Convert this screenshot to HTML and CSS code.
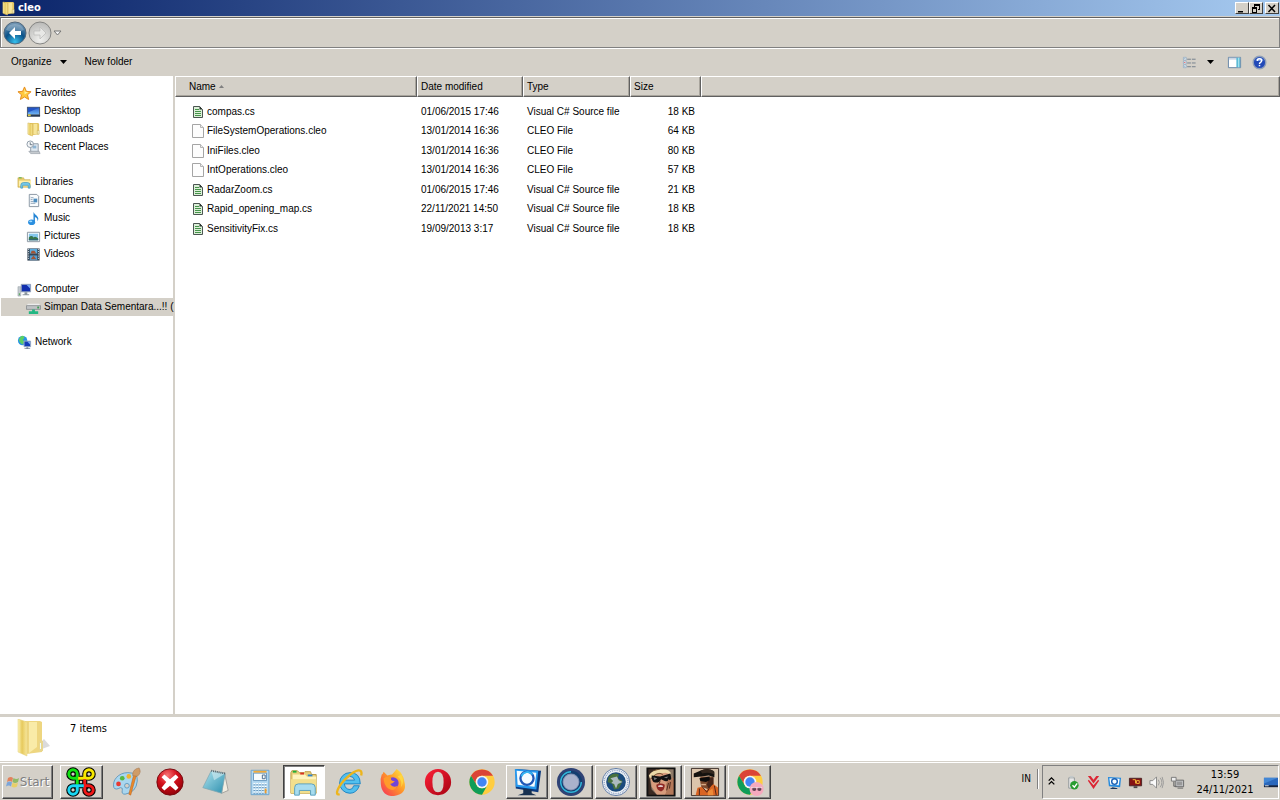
FILE: index.html
```html
<!DOCTYPE html>
<html lang="en">
<head>
<meta charset="utf-8">
<title>cleo</title>
<link rel="stylesheet" href="styles.css">
</head>
<body>
<svg class="defs" aria-hidden="true">
  <defs>
    <linearGradient id="gold" x1="0" x2="1" y1="0" y2="0"><stop offset="0" stop-color="#fdf3b4"/><stop offset=".45" stop-color="#e6c95c"/><stop offset="1" stop-color="#f8e79c"/></linearGradient>
    <linearGradient id="blue" x1="0" x2="0" y1="0" y2="1"><stop offset="0" stop-color="#2f62cf"/><stop offset="1" stop-color="#6db4f4"/></linearGradient>
    <linearGradient id="shade" x1="0" x2="1" y1="0" y2="1"><stop offset="0" stop-color="#aee3ee"/><stop offset="1" stop-color="#2d8fae"/></linearGradient>
    <radialGradient id="orb" cx=".5" cy=".9" r=".9"><stop offset="0" stop-color="#36c0ee"/><stop offset=".5" stop-color="#0b5288"/><stop offset="1" stop-color="#7d9db8"/></radialGradient>
    <radialGradient id="orbgrey" cx=".5" cy=".8" r=".8"><stop offset="0" stop-color="#f0f0ee"/><stop offset="1" stop-color="#b9b9b7"/></radialGradient>
    <radialGradient id="redball" cx=".4" cy=".25" r=".8"><stop offset="0" stop-color="#f87878"/><stop offset=".45" stop-color="#d4101b"/><stop offset="1" stop-color="#8c0008"/></radialGradient>
    <linearGradient id="fire" x1="1" x2="0" y1="0" y2="1"><stop offset="0" stop-color="#fff04a"/><stop offset=".45" stop-color="#ff9a28"/><stop offset="1" stop-color="#f52a5c"/></linearGradient>
    <linearGradient id="opera" x1="0" x2="1" y1="0" y2="1"><stop offset="0" stop-color="#ff2038"/><stop offset="1" stop-color="#a50312"/></linearGradient>
    <symbol id="folder" viewBox="0 0 16 16"><path d="M4 1h9l1 1v11l-8 1H4z" fill="#e3c563"/><path d="M2 1l5 1v13l-5-2z" fill="url(#gold)" stroke="#cfae45" stroke-width=".5"/><path d="M8 2h4v11H8z" fill="#f6e59a"/><path d="M12 9h2v4h-2z" fill="#f4f1cd" stroke="#c4a447" stroke-width=".5"/></symbol>
    <symbol id="source" viewBox="0 0 14 16"><path d="M2.500 2.500h6l3 3v8h-9z" fill="#dcefd9" stroke="#4b5551"/><path d="M8.500 2v3.500h3z" fill="#26302b"/><path d="M4 5.500h4M4 7.500h6M4 9.500h6M4 11.500h6" stroke="#46944a"/></symbol>
    <symbol id="blank" viewBox="0 0 14 16"><path d="M1.500 1.500h8l3 3v10h-11z" fill="#fdfdfd" stroke="#a5a5a5"/><path d="M9.500 1.500v3h3" fill="#eee" stroke="#b5b5b5"/></symbol>
    <symbol id="library" viewBox="0 0 16 16"><path d="M1 3h6l1 2h6v8H1z" fill="#e8cc6d" stroke="#c8a744" stroke-width=".6"/><path d="M2 6h13v6H2z" fill="#fff0ad"/><path d="M2 3h3" stroke="#44ad42"/><path d="M4 14v-3q0-3 3-3h4q3 0 3 3v3h-2v-3H6v3z" fill="#74c8e9" stroke="#3c92b9" stroke-width=".7"/></symbol>
    <symbol id="chrome" viewBox="0 0 32 32"><circle cx="16" cy="16" r="13.500" fill="#ffcd40"/><path d="M4.300 9.300A13.500 13.500 0 0 1 27.700 9.300H16a6.700 6.700 0 0 0-5.900 10z" fill="#db4437"/><path d="M4.300 9.300A13.500 13.500 0 0 0 16 29.500l5.900-10.200a6.700 6.700 0 0 1-11.700 0z" fill="#0f9d58"/><circle cx="16" cy="16" r="6.700" fill="#f4f4f4"/><circle cx="16" cy="16" r="5" fill="#4285f4"/></symbol>
  </defs>
</svg>

<header class="titlebar">
  <svg class="i16"><use href="#folder"/></svg>
  <h1>cleo</h1>
  <div class="controls">
    <button aria-label="Minimize"><svg viewBox="0 0 10 9"><path d="M1 7h5v1.500H1z"/></svg></button>
    <button aria-label="Restore"><svg viewBox="0 0 10 9"><path d="M3 0h6v6H7V5h1V2H4v1H3zM1 3h5v6H1zm1 2v3h3V5z" fill-rule="evenodd"/></svg></button>
    <button class="close" aria-label="Close"><svg viewBox="0 0 10 9"><path d="M1.500 1l6.500 7M8 1L1.500 8" stroke="#000" stroke-width="1.500"/></svg></button>
  </div>
</header>

<nav class="navbar" aria-label="History">
  <button aria-label="Back"><svg viewBox="0 0 24 24"><circle cx="12" cy="12" r="11" fill="url(#orb)" stroke="#52677a"/><path d="M3 9a9.500 9 0 0 1 18 0q-9 4-18 0z" fill="#fff" opacity=".25"/><path d="M12 6l-6 6 6 6v-4h6v-4h-6z" fill="#fff"/></svg></button>
  <button aria-label="Forward"><svg viewBox="0 0 24 24"><circle cx="12" cy="12" r="11" fill="url(#orbgrey)" stroke="#858583"/><path d="M12 6l6 6-6 6v-4H6v-4h6z" fill="#e8e8e6" stroke="#b9b9b7" stroke-width=".7"/></svg></button>
  <button class="recent" aria-label="Recent pages"><svg viewBox="0 0 9 6"><path d="M1 1h7L4.500 5z" fill="#f3f3f3" stroke="#777"/></svg></button>
</nav>

<div class="toolbar">
  <button>Organize <svg class="caret" viewBox="0 0 7 4"><path d="M0 0h7L3.500 4z"/></svg></button>
  <button>New folder</button>
  <div class="view-tools">
    <button aria-label="Change your view"><svg class="i16" viewBox="0 0 16 16"><path d="M5.500 4.500h4m1 0h4M5.500 8.500h4m1 0h4M5.500 12.500h4m1 0h4" stroke="#717d8b"/><g fill="#fff" stroke="#8aa3bc" stroke-width=".8"><path d="M1.500 2.500h3v3h-3zM1.500 6.500h3v3h-3zM1.500 10.500h3v3h-3z"/></g><path d="M2.500 7.500h1v1h-1z" fill="#d33"/><path d="M2.500 3.500h1v1h-1zM2.500 11.500h1v1h-1z" fill="#58a"/></svg></button>
    <button aria-label="More view options"><svg class="caret" viewBox="0 0 7 4"><path d="M0 0h7L3.500 4z"/></svg></button>
    <button class="preview" aria-label="Show the preview pane"><svg class="i16" viewBox="0 0 16 16"><path d="M1.500 2.500h13v11h-13z" fill="#fff" stroke="#6283a4"/><path d="M2 3h12v2H2z" fill="#cbd6e6"/><path d="M10 3h4v10h-4z" fill="#5bbbd6"/><path d="M12 3h1v10h-1z" fill="#bcecf4"/></svg></button>
    <button aria-label="Help"><svg class="i16" viewBox="0 0 16 16"><circle cx="8" cy="8" r="6.700" fill="#2249b8" stroke="#8e9eb8" stroke-width="1.500"/><path d="M3.500 5.500q4.500-5 9 0-4 2-9 0" fill="#6e94e3"/><path d="M5.700 6.300q0-2.300 2.300-2.300t2.300 2q0 1-1.200 1.800T8 9.600" fill="none" stroke="#fff" stroke-width="1.500"/><path d="M7.200 10.500h1.600V12H7.200z" fill="#fff"/></svg></button>
  </div>
</div>

<main class="content">
  <nav class="sidebar" aria-label="Folders">
    <ul>
      <li class="head"><a href="#"><svg class="i16" viewBox="0 0 16 16"><path d="M8 1l2 4.700 5 .4-3.800 3.300 1.200 5L8 11.700l-4.400 2.700 1.200-5L1 6.100l5-.4z" fill="#ffc83d" stroke="#e58a1c"/><path d="M8 3l1 3.500h3L8 9z" fill="#fff0a0"/></svg>Favorites</a></li>
      <li><a href="#"><svg class="i16" viewBox="0 0 16 16"><path d="M1 3h14v10H1z" fill="#4e5b6e"/><path d="M2 4h12v7H2z" fill="url(#blue)"/><path d="M2 4h12L2 9z" fill="#2455c5"/><path d="M1 12h14v1.500H1z" fill="#1d2f49"/><path d="M2 11h3v2H2z" fill="#d7c84b"/></svg>Desktop</a></li>
      <li><a href="#"><svg class="i16"><use href="#folder"/></svg>Downloads</a></li>
      <li><a href="#"><svg class="i16" viewBox="0 0 16 16"><path d="M5 4h8v9H5z" fill="#dfe8f0" stroke="#8d99a5"/><path d="M7 6h4v3H7z" fill="#8eb5d4"/><path d="M3 12h11l1 2.500H5z" fill="#c5cacf" stroke="#87919b" stroke-width=".6"/><circle cx="4.500" cy="4.500" r="3.500" fill="#f5f7f9" stroke="#8d9aa6"/><path d="M4.500 2.500v2.500H7" fill="none" stroke="#456" stroke-width=".8"/></svg>Recent Places</a></li>
    </ul>
    <ul>
      <li class="head"><a href="#"><svg class="i16"><use href="#library"/></svg>Libraries</a></li>
      <li><a href="#"><svg class="i16" viewBox="0 0 16 16"><path d="M3.500 1.500h8l2 2v11h-10z" fill="#fafcfd" stroke="#8893a0"/><path d="M5 5h3M5 7h2M5 9h3M5 11h5" stroke="#8ea2b7"/><path d="M8 6h4v4H8z" fill="#4d8dbf"/><path d="M4 3v10" stroke="#adbac6" stroke-dasharray="1 1"/></svg>Documents</a></li>
      <li><a href="#"><svg class="i16" viewBox="0 0 16 16"><path d="M8 1q1 2 3.500 4 3 3 .5 6 1-3-2.500-4.500V12H8z" fill="#2686d5"/><ellipse cx="6" cy="12" rx="3.800" ry="3" fill="#2b8fe0"/><ellipse cx="5" cy="11" rx="1.700" ry="1" fill="#a0dcff"/></svg>Music</a></li>
      <li><a href="#"><svg class="i16" viewBox="0 0 16 16"><path d="M1.500 3.500h13v10h-13z" fill="#fff" stroke="#8995a1"/><path d="M3 5h10v7H3z" fill="#86c7ed"/><path d="M3 9q3-3 5 0 2-2 5 1v2H3z" fill="#38764b"/><path d="M3 11h10v1H3z" fill="#2a5f86"/></svg>Pictures</a></li>
      <li><a href="#"><svg class="i16" viewBox="0 0 16 16"><path d="M1.500 1.500h13v13h-13z" fill="#354656"/><path d="M4 2h8v5H4z" fill="#5eaddd"/><path d="M4 9h8v5H4z" fill="#549dd0"/><path d="M6 4h3l2 3H5zM5 13l3-4 3 4z" fill="#a35536"/><path d="M2.700 2v12M13.300 2v12" stroke="#e5edf2" stroke-dasharray="1 1.400"/></svg>Videos</a></li>
    </ul>
    <ul>
      <li class="head"><a href="#"><svg class="i16" viewBox="0 0 16 16"><path d="M1 5h3v10H1z" fill="#c5cbd0" stroke="#88929b" stroke-width=".5"/><path d="M2 12h1v2H2z" fill="#49a34d"/><path d="M4.500 2.500h10v8h-10z" fill="#122fae" stroke="#9ba8b7"/><path d="M10 3h4v4z" fill="#7ba8f3"/><path d="M8 11h3v2h2v1H6v-1h2z" fill="#8c969f"/></svg>Computer</a></li>
      <li class="selected"><a href="#"><svg class="i16" viewBox="0 0 16 16"><path d="M2 4h12l1.500 2H.500z" fill="#ececec"/><path d="M.500 6h15v4H.500z" fill="#bfc2c5" stroke="#777d82" stroke-width=".7"/><path d="M12 7h2v2h-2z" fill="#3b9a50"/><path d="M6.500 10h3v2H13v3H3v-3h3.500z" fill="#22b783"/></svg>Simpan Data Sementara...!! (</a></li>
    </ul>
    <ul>
      <li class="head"><a href="#"><svg class="i16" viewBox="0 0 16 16"><circle cx="6" cy="6" r="5" fill="#2994e4"/><path d="M2 5q2-5 5-4 2 2-1 4 3 2 0 5-3-1-4-5" fill="#5bcf64"/><path d="M7.500 6.500h7v6h-7z" fill="#123bb8" stroke="#9daec4"/><path d="M11 7h3v3z" fill="#7aabf3"/><path d="M10 13h2v1h2v1H8v-1h2z" fill="#788798"/></svg>Network</a></li>
    </ul>
  </nav>

  <section class="files">
    <table>
      <colgroup><col class="c-name"><col class="c-date"><col class="c-type"><col class="c-size"><col></colgroup>
      <thead><tr><th>Name <svg class="sort" viewBox="0 0 5 3"><path d="M0 3L2.500 0 5 3z"/></svg></th><th>Date modified</th><th>Type</th><th>Size</th><td></td></tr></thead>
      <tbody>
        <tr><td><svg><use href="#source"/></svg>compas.cs</td><td>01/06/2015 17:46</td><td>Visual C# Source file</td><td>18 KB</td><td></td></tr>
        <tr><td><svg><use href="#blank"/></svg>FileSystemOperations.cleo</td><td>13/01/2014 16:36</td><td>CLEO File</td><td>64 KB</td><td></td></tr>
        <tr><td><svg><use href="#blank"/></svg>IniFiles.cleo</td><td>13/01/2014 16:36</td><td>CLEO File</td><td>80 KB</td><td></td></tr>
        <tr><td><svg><use href="#blank"/></svg>IntOperations.cleo</td><td>13/01/2014 16:36</td><td>CLEO File</td><td>57 KB</td><td></td></tr>
        <tr><td><svg><use href="#source"/></svg>RadarZoom.cs</td><td>01/06/2015 17:46</td><td>Visual C# Source file</td><td>21 KB</td><td></td></tr>
        <tr><td><svg><use href="#source"/></svg>Rapid_opening_map.cs</td><td>22/11/2021 14:50</td><td>Visual C# Source file</td><td>18 KB</td><td></td></tr>
        <tr><td><svg><use href="#source"/></svg>SensitivityFix.cs</td><td>19/09/2013 3:17</td><td>Visual C# Source file</td><td>18 KB</td><td></td></tr>
      </tbody>
    </table>
  </section>
</main>

<section class="details">
  <svg viewBox="0 0 36 38"><path d="M12 35l22-8-6-7z" fill="#999" opacity=".35"/><path d="M9 2h15l2 1v30l-16 2z" fill="#eed680"/><path d="M2 0l9 3v34l-9-4z" fill="url(#gold)" stroke="#e3cc78" stroke-width=".5"/><path d="M13 3h8v25l-8 6z" fill="#f9eba8"/><path d="M23 22h4v10l-4 1z" fill="#e8d68e"/><path d="M24 24h1v6h-1z" fill="#eefcff"/></svg>
  <p>7 items</p>
</section>

<footer class="taskbar">
  <button class="start"><svg viewBox="0 0 14 14"><path d="M2 3q3-2 5 0L6 7q-2-2-5 0z" fill="#e2825c"/><path d="M7.500 3q3 2 5.500 0l-1 4q-3 2-5.500 0z" fill="#91b967"/><path d="M1 7.500q3-2 5 0l-1 4q-2-2-5 0z" fill="#7ca5d8"/><path d="M6.500 7.500q3 2 5.500 0l-1 4q-3 2-5.500 0z" fill="#e8cf68"/></svg>Start</button>
  <div class="tasks">
    <button class="open" aria-label="Loop"><svg viewBox="0 0 32 32"><g fill="none" stroke="#000" stroke-width="5.500"><rect x="12" y="12" width="8" height="8"/><circle cx="7.500" cy="7.500" r="4.500"/><circle cx="24.500" cy="7.500" r="4.500"/><circle cx="7.500" cy="24.500" r="4.500"/><circle cx="24.500" cy="24.500" r="4.500"/></g><g fill="none" stroke-width="3.200"><path d="M12 19V7.500A4.500 4.500 0 1 0 7.500 12H12" stroke="#12e212"/><path d="M13 12H24.500A4.500 4.500 0 1 0 20 7.500V12" stroke="#f8e800"/><path d="M20 13V24.500A4.500 4.500 0 1 0 24.500 20H20" stroke="#f01818"/><path d="M19 20H7.500A4.500 4.500 0 1 0 12 24.500V20" stroke="#19d5f2"/></g></svg></button>
    <button aria-label="Paint"><svg viewBox="0 0 32 32"><path d="M3 22C1 14 8 6 18 6q11 0 10 9-1 12-13 14-4 0-3-4 1-3-2-3-5 3-7 0z" fill="#a9d6ef" stroke="#6299bd"/><circle cx="8" cy="18" r="2.500" fill="#e83a32"/><circle cx="12" cy="12" r="2.500" fill="#56b841"/><circle cx="19" cy="10" r="2.500" fill="#f3b32e"/><circle cx="17" cy="20" r="2.500" fill="#d5cfc7" stroke="#5f9bc1"/><path d="M27 9l-6 21-2-1 5-20z" fill="#e8892b" stroke="#b95d19" stroke-width=".5"/><path d="M23 9q0-7 7-8 3 5-2 9z" fill="#cf9c67" stroke="#9f7048" stroke-width=".5"/></svg></button>
    <button aria-label="Stop"><svg viewBox="0 0 32 32"><circle cx="16" cy="16" r="14" fill="url(#redball)" stroke="#74090e"/><path d="M10 8l6 5 6-5 3 3-5 5 5 6-3 3-6-5-6 5-3-3 5-6-5-5z" fill="#fff"/></svg></button>
    <button aria-label="Notepad"><svg viewBox="0 0 32 32"><path d="M26 6l4 19-7 3z" fill="#f1ede1" stroke="#777" stroke-width=".6"/><path d="M12 4l15 3-4 21-20-6z" fill="url(#shade)" stroke="#82a7b1" stroke-width=".8"/><path d="M12 4l15 3-12 7z" fill="#d5edf2" opacity=".6"/><path d="M12 4l15 3" stroke="#59646b" stroke-dasharray="1 1" stroke-width="2"/></svg></button>
    <button aria-label="Calculator"><svg viewBox="0 0 32 32"><path d="M6.500 3.500h19v26h-19z" fill="#b6daf2" stroke="#69a2cd"/><path d="M9 6.500h14v8H9z" fill="#f6fbfd" stroke="#5f91bb"/><path d="M9 5h14" stroke="#f2ab39" stroke-width="2"/><path d="M18.500 8.500h3v4h-3z" fill="none" stroke="#47698a"/><path d="M9 18h14M9 21h14M9 24h14M9 27h14" stroke="#f8feff" stroke-width="2" stroke-dasharray="2 1"/><path d="M9 19h14M9 22h14M9 25h14M9 28h14" stroke="#5c8eb7" stroke-dasharray="2 1"/><path d="M21 23h2v5h-2z" fill="#ed9d2d"/></svg></button>
    <button class="active" aria-label="File Explorer"><svg viewBox="0 0 32 32"><path d="M2 6l1-2h6l2 2h5l1-1h6l1 3h5v20H2z" fill="#e9d07b" stroke="#bc9b43"/><path d="M4 8h13l2 2h10v16H4z" fill="#fff4be"/><path d="M4 5h4" stroke="#21ae36" stroke-width="2"/><path d="M12 7h4" stroke="#d93126" stroke-width="2"/><path d="M20 9h5" stroke="#2c83d2" stroke-width="2"/><path d="M2 13h27v15H2z" fill="#f2df8d"/><path d="M6 30V22q0-4 4-4h14q4 0 4 4v8h-5v-5H11v5z" fill="#a7dcef" stroke="#589fbe"/></svg></button>
    <button aria-label="Internet Explorer"><svg viewBox="0 0 32 32"><path d="M27 20q-3 8-10 8a11 11 0 0 1 0-22q11 0 11 12H11q1 6 6 6 3 0 4-4zM11 14h11q-1-4-5-4-5 0-6 4z" fill="#52bfee" stroke="#1b83c3" fill-rule="evenodd"/><path d="M6 29C0 31 4 20 14 11S31 1 29 9" fill="none" stroke="#edb51c" stroke-width="2.500"/></svg></button>
    <button aria-label="Firefox"><svg viewBox="0 0 32 32"><path d="M4 8q1 0 2-3l4 4q3-1 5-1l5-6q7 5 8 13 4 14-11 16Q4 31 3 18q-1-5 1-10z" fill="url(#fire)"/><circle cx="16" cy="17" r="6" fill="#7145d6"/><path d="M6 12q5-3 8 0-1 3 4 3-2 3-5 3 3 5 8 2-4 7-10 3-5-4-5-11" fill="#ff9b2b"/><path d="M21 10q6 5 3 12 5-6 1-14z" fill="#ffd640"/></svg></button>
    <button aria-label="Opera"><svg viewBox="0 0 32 32"><path d="M16 2a14 14 0 1 0 0 28 14 14 0 0 0 0-28zm0 3q6 0 6 11t-6 11-6-11 6-11z" fill="url(#opera)" fill-rule="evenodd"/></svg></button>
    <button aria-label="Chrome"><svg><use href="#chrome"/></svg></button>
    <button class="open" aria-label="Display"><svg viewBox="0 0 32 32"><path d="M4 2l27 2-3 23-24-4z" fill="#0b397e"/><path d="M3 2l25 2-2 20-22-3z" fill="#2597ed"/><path d="M5 4l21 2-2 15-18-2z" fill="#f5fbff"/><circle cx="16" cy="12" r="7" fill="none" stroke="#1f57b6" stroke-width="2.500"/><path d="M10 10a7 7 0 0 1 12-2" fill="none" stroke="#35b5f4" stroke-width="2"/><path d="M12 23l9 1v4l5 2H6l6-2z" fill="#173151"/></svg></button>
    <button class="open" aria-label="Ring"><svg viewBox="0 0 32 32"><circle cx="16" cy="16" r="15" fill="#2f4275"/><circle cx="16" cy="16" r="10.500" fill="#7f90b4" stroke="#143e6f" stroke-width="3"/><path d="M16 5a11 11 0 1 0 11 11" fill="none" stroke="#32b5d8" stroke-width="1.500"/><circle cx="16" cy="16" r="8" fill="#aab2cb"/></svg></button>
    <button class="open" aria-label="Globe"><svg viewBox="0 0 32 32"><circle cx="16" cy="16" r="14.500" fill="#eef1f5" stroke="#617da6"/><circle cx="16" cy="16" r="12.500" fill="none" stroke="#8fa5c6" stroke-width="1.500" stroke-dasharray="1 1"/><circle cx="16" cy="16" r="10.500" fill="#1b4b7e"/><path d="M8 11q5-6 11-3l-1 4 5 3-4 8-5 1-2-6-5-2z" fill="#48713e"/><path d="M10 12l7-2 2 4 4 2-5 2-2 5-2-5-3-1 2-2z" fill="#aebbc0"/></svg></button>
    <button class="open" aria-label="Woman in sunglasses"><svg viewBox="0 0 32 32"><path d="M1 1h30v30H1z" fill="#8f7a68"/><path d="M2 2h10L4 12l2 12 6 6H2z" fill="#3b2a22"/><path d="M5 12q2-9 11-10 10 1 11 9l-1 11-6 8h-8l-6-9z" fill="#d89c7c"/><path d="M3 9q6-8 14-7 9 0 10 6l-6-2-8 1-9 5z" fill="#ecd9a8"/><path d="M5 13q7-9 13-5M8 4l7-2" stroke="#6f4b2b" fill="none"/><path d="M6 9l9 1 11-3 1 5q-1 4-7 3l-4-2q-2 5-8 3-2-2-2-7z" fill="#111"/><path d="M8 11l4 1-3 2zM19 11l5-1-2 2z" fill="#777"/><path d="M11 19q5-3 9 0 0 6-4 7-5-1-5-7z" fill="#8e2824"/><path d="M13 20q3-1 5 0v1h-5z" fill="#fff"/><path d="M20 31l2-6-1-6 3-6 3 2 1-4 3 2v18z" fill="#b4795a"/><path d="M22 25l2-8M26 16l-1 7M15 15l-1 3" stroke="#4a281d"/><path d="M1.500 1.500h29v29h-29z" fill="none" stroke="#111" stroke-width="2"/></svg></button>
    <button class="open" aria-label="Man in cap"><svg viewBox="0 0 32 32"><path d="M1.500 1.500h29v29h-29z" fill="#dcc5ac" stroke="#382a23"/><path d="M11 10h14v9l-5 5-8-3-1-5z" fill="#7d4a2d"/><path d="M20 12l5-1v8l-5 5-2-5z" fill="#45251a"/><path d="M4 7l7-3q9-4 15 1v6l-6-2-8 1-8 1z" fill="#15120f"/><path d="M11 4q7-4 14 0l1 4q-6-3-13-1z" fill="#36281e"/><path d="M10 12l11-2v4l-4 2-6-1z" fill="#0c0c0c"/><path d="M12 18h5v1.500h-5z" fill="#d8aa86"/><path d="M6 30l2-8 5-1 4 4 8-7 5 4v8z" fill="#d96423"/><path d="M13 21l5 6 4-7M10 23v7M26 20l2 10" fill="none" stroke="#4c2216"/><path d="M19 26l5-3 1 7h-6z" fill="#ef8b38"/></svg></button>
    <button class="open" aria-label="Chrome profile"><svg viewBox="0 0 32 32"><use href="#chrome"/><circle cx="23" cy="23.500" r="7.500" fill="#f5a9be"/><circle cx="20.500" cy="23.500" r="2.200" fill="#624051"/><circle cx="26" cy="23.500" r="2.200" fill="#624051"/><path d="M17 22h12" stroke="#f4dae3"/></svg></button>
  </div>
  <span class="lang">IN</span>
  <div class="tray">
    <button aria-label="Show hidden icons"><svg viewBox="0 0 16 16"><path d="M5 6l3-3 3 3M5 10l3-3 3 3" fill="none" stroke="#000" stroke-width="1.400"/></svg></button>
    <button aria-label="Safely remove hardware"><svg viewBox="0 0 16 16"><path d="M4 3h6v11H4z" fill="#e8e8e8" stroke="#8f9699"/><path d="M5 1h4v2H5z" fill="#c3c9ca"/><circle cx="10" cy="11" r="4.500" fill="#299c31"/><path d="M8 11l2 2 3-4" fill="none" stroke="#fff" stroke-width="1.500"/></svg></button>
    <button aria-label="Download manager"><svg viewBox="0 0 16 16"><path d="M2 1h3l3 4 3-4h3L8 9zM2 6l6 9 6-9-1-1-5 6-5-6z" fill="#db2634"/></svg></button>
    <button aria-label="Remote display"><svg viewBox="0 0 16 16"><path d="M1 2l14 1-1 10-12-1z" fill="#2489dd"/><path d="M2.500 3.500l11 .500-1 7-9-.500z" fill="#f6fcff"/><circle cx="8" cy="7" r="3" fill="none" stroke="#175fb5" stroke-width="1.500"/><path d="M6 13l5 1v1H3z" fill="#1b355b"/></svg></button>
    <button aria-label="Monitor"><svg viewBox="0 0 16 16"><path d="M1.500 3.500h13v8h-13z" fill="#861313" stroke="#482324"/><path d="M5 5h3v4M9 6h3v3H9z" fill="none" stroke="#f4ba3c"/><path d="M6 12h4v2H6z" fill="#4b4848"/></svg></button>
    <button aria-label="Volume"><svg viewBox="0 0 16 16"><path d="M1 6h3l4-4v12l-4-4H1z" fill="#fafafa" stroke="#888"/><path d="M10 5q2 3 0 6M12 3q3.500 5 0 10M14 2q3 6 0 12" fill="none" stroke="#999"/></svg></button>
    <button aria-label="Network status"><svg viewBox="0 0 16 16"><path d="M5.500 5.500h9v7h-9z" fill="#c4c6c8" stroke="#666"/><path d="M7 7h6v4H7z" fill="#999"/><path d="M1.500 2.500h5v4h-5z" fill="#eee" stroke="#777"/><path d="M4 7v5h3M8 14h6" fill="none" stroke="#666"/></svg></button>
    <time><span>13:59</span><span>24/11/2021</span></time>
    <button class="desk" aria-label="Show desktop"><svg viewBox="0 0 16 16"><path d="M1 3h15v9H1z" fill="#2a68bc"/><path d="M1 3h15L1 9z" fill="#4387d5"/><path d="M1 11h15v2H1z" fill="#16253f"/><path d="M2 11h4v1H2z" fill="#e1e7ed"/></svg></button>
  </div>
</footer>
</body>
</html>
```

FILE: styles.css
```css
* { box-sizing: border-box; }
body {
  margin: 0;
  min-height: 100vh;
  display: flex;
  flex-direction: column;
  background: #d4d0c8;
  color: #000;
  font: 10px/18px "Liberation Sans", Arial, sans-serif;
}
button {
  padding: 0;
  border: 0;
  background: none;
  color: inherit;
  font: inherit;
  display: flex;
  align-items: center;
  justify-content: center;
}
svg { display: block; flex: none; }
ul { margin: 0; padding: 0; list-style: none; }
.defs { position: absolute; width: 0; height: 0; }
.i16 { width: 15px; height: 15px; }

.titlebar {
  height: 16px;
  padding: 0 1px;
  display: flex;
  align-items: center;
  background: linear-gradient(90deg, #0a246a, #a6caf0);
}
.titlebar h1 {
  margin: 0 0 0 2px;
  color: #fff;
  font: bold 11px/16px "DejaVu Sans Condensed", "Noto Sans", sans-serif;
}
.controls { margin-left: auto; display: flex; }
.controls button {
  width: 14px;
  height: 12px;
  background: #d4d0c8;
  border: 1px solid;
  border-color: #fff #404040 #404040 #fff;
}
.controls svg { width: 10px; height: 9px; }
.controls .close { margin-left: 2px; }

.navbar {
  height: 31px;
  margin-top: 1px;
  padding: 0 3px 0 2px;
  display: flex;
  align-items: center;
  gap: 1px;
  border: 1px solid #808080;
  border-top-color: #606060;
  box-shadow: inset 1px 1px #fff, 0 1px #fff;
}
.navbar svg { width: 24px; height: 24px; }
.navbar .recent svg { width: 9px; height: 6px; }

.toolbar {
  height: 28px;
  padding: 0 13px 0 11px;
  display: flex;
  align-items: center;
  gap: 18px;
}
.toolbar .caret { width: 7px; height: 4px; }
.toolbar button { gap: 8px; }
.view-tools { margin-left: auto; display: flex; align-items: center; gap: 10px; }
.view-tools .preview { margin: 0 0 0 3px; }

.content {
  flex: 1;
  display: flex;
  background: #fff;
  border-bottom: 3px solid #d4d0c8;
}
.sidebar {
  width: 175px;
  padding: 8px 0 0 1px;
  display: flex;
  flex-direction: column;
  gap: 17px;
  border-right: 2px solid #d4d0c8;
}
.sidebar a {
  height: 18px;
  padding-left: 25px;
  display: flex;
  align-items: center;
  gap: 3px;
  white-space: nowrap;
  color: #000;
  text-decoration: none;
}
.sidebar .head a { padding-left: 16px; }
.sidebar .selected { background: #d4d0c8; }

.files { flex: 1; }
table { width: 100%; table-layout: fixed; border-collapse: separate; border-spacing: 0; }
.c-name { width: 242px; }
.c-date { width: 106px; }
.c-type { width: 107px; }
.c-size { width: 71px; }
th, td { padding: 0 0 0 4px; text-align: left; font-weight: normal; white-space: nowrap; }
thead th, thead td {
  height: 21px;
  background: #d4d0c8;
  border: 1px solid;
  border-color: #fff #606060 #606060 #fff;
  box-shadow: inset -1px -1px #a8a49c;
}
thead th { padding-left: 3px; }
thead th:first-child { padding-left: 13px; }
.sort { display: inline-block; width: 5px; height: 3px; margin-left: 1px; vertical-align: middle; fill: #808080; }
tbody::before { content: ""; display: block; height: 5px; }
tbody td { height: 19px; line-height: 19px; }
tbody tr:nth-child(even) td { height: 20px; line-height: 20px; }
tbody td:first-child { padding-left: 16px; }
tbody td:nth-child(4) { padding-right: 6px; text-align: right; }
tbody svg { display: inline-block; width: 14px; height: 16px; margin-right: 2px; vertical-align: middle; }

.details {
  height: 44px;
  padding: 2px 16px;
  display: flex;
  gap: 18px;
  background: #fff;
  font: 11px "DejaVu Sans Condensed", "Noto Sans", sans-serif;
}
.details svg { width: 36px; height: 38px; }
.details p { margin: 0; line-height: 20px; }

.taskbar {
  height: 39px;
  padding: 3px 1px 1px 0;
  display: flex;
  border-top: 1px solid #d4d0c8;
  box-shadow: inset 0 1px #fff;
}
.start, .tasks .open {
  border: 1px solid;
  border-color: #fff #404040 #404040 #fff;
  box-shadow: inset -1px -1px #808080;
}
.start {
  width: 51px;
  margin: 0 7px 0 2px;
  color: #808080;
  font: 12px "DejaVu Sans", sans-serif;
  text-shadow: 1px 1px #fff;
}
.start svg { width: 14px; height: 14px; }
.tasks {
  flex: 0 1 711px;
  display: grid;
  grid-template-columns: repeat(16, minmax(0, 1fr));
  gap: 2px;
}
.tasks svg { width: 30px; height: 30px; }
.tasks .active {
  background: #fff;
  border: 1px solid;
  border-color: #404040 #fff #fff #404040;
  box-shadow: inset 1px 1px #808080;
}
.lang {
  margin-left: auto;
  height: 20px;
  margin-top: 4px;
  padding-right: 6px;
  font: 10px/20px "DejaVu Sans Condensed", "Noto Sans", sans-serif;
  border-right: 1px solid #808080;
  box-shadow: 1px 0 #fff;
}
.tray {
  margin-left: 4px;
  padding-left: 1px;
  display: flex;
  align-items: center;
  gap: 6px;
  border: 1px solid;
  border-color: #808080 #fff #fff #808080;
}
.tray svg { width: 15px; height: 15px; }
.tray time {
  width: 68px;
  display: flex;
  flex-direction: column;
  align-items: center;
  font: 11px/15px "DejaVu Sans Condensed", "Noto Sans", sans-serif;
}
.tray .desk { margin-left: -2px; }
```
